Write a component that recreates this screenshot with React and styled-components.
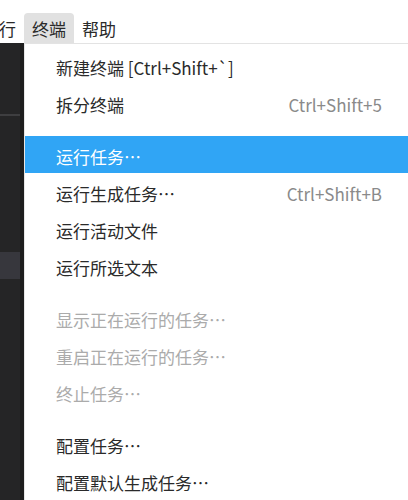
import styled, { createGlobalStyle } from 'styled-components';

const GlobalStyle = createGlobalStyle`
  html, body {
    margin: 0;
    padding: 0;
    background: #ffffff;
    overflow: hidden;
  }
  body {
    font-family: "Noto Sans CJK SC", "Noto Sans", sans-serif;
  }
`;

const Page = styled.div`
  width: 408px;
  height: 500px;
  display: flex;
  flex-direction: column;
  overflow: hidden;
`;

const MenuBar = styled.div`
  height: 43px;
  display: flex;
  align-items: flex-end;
  background: #ffffff;
  flex-shrink: 0;
`;

const BarItem = styled.div`
  height: 30px;
  padding: 0 8px;
  display: flex;
  align-items: center;
  font-size: 17px;
  color: #2a2a2a;
  border-radius: 4px 4px 0 0;
  background: ${(p) => (p.$open ? '#e1e1e1' : 'transparent')};
  margin-left: ${(p) => (p.$offset ? p.$offset : '0')};
  white-space: nowrap;
`;

const Body = styled.div`
  flex: 1;
  display: flex;
  min-height: 0;
`;

const Sidebar = styled.div`
  width: 20px;
  background: #252526;
  border-right: 4px solid #1e1e1e;
  display: flex;
  flex-direction: column;
  flex-shrink: 0;
`;

const SideRule = styled.div`
  height: 2px;
  background: #3e3e40;
  margin-top: 71px;
`;

const SideRow = styled.div`
  height: 27px;
  background: #37373d;
  margin-top: 136px;
`;

const Menu = styled.div`
  flex: 1;
  background: #ffffff;
  border-left: 1px solid #e6e6e6;
  border-top: 1px solid #e3e3e3;
  padding-top: 3px;
  display: flex;
  flex-direction: column;
`;

const Item = styled.div`
  height: 37px;
  flex-shrink: 0;
  display: flex;
  align-items: center;
  justify-content: space-between;
  padding: 0 26px 0 31px;
  font-size: 17px;
  background: ${(p) => (p.$active ? '#30a5f5' : 'transparent')};
  color: ${(p) => (p.$active ? '#ffffff' : p.$disabled ? '#ababab' : '#2a2a2a')};
  white-space: nowrap;
`;

const Label = styled.span`
  padding-top: 3px;
`;

const Shortcut = styled.span`
  color: #8a8a8a;
  padding-top: 3px;
`;

const Separator = styled.div`
  height: 15px;
  flex-shrink: 0;
`;

const groups = [
  [
    { label: '新建终端 [Ctrl+Shift+`]' },
    { label: '拆分终端', key: 'Ctrl+Shift+5' },
  ],
  [
    { label: '运行任务…', active: true },
    { label: '运行生成任务…', key: 'Ctrl+Shift+B' },
    { label: '运行活动文件' },
    { label: '运行所选文本' },
  ],
  [
    { label: '显示正在运行的任务…', disabled: true },
    { label: '重启正在运行的任务…', disabled: true },
    { label: '终止任务…', disabled: true },
  ],
  [
    { label: '配置任务…' },
    { label: '配置默认生成任务…' },
  ],
];

const App = () => {
  return (
    <Page lang="zh-CN">
      <GlobalStyle />
      <MenuBar>
        <BarItem $offset="-26px">运行</BarItem>
        <BarItem $open>终端</BarItem>
        <BarItem>帮助</BarItem>
      </MenuBar>
      <Body>
        <Sidebar>
          <SideRule />
          <SideRow />
        </Sidebar>
        <Menu>
          {groups.map((g, gi) => (
            <div key={gi}>
              {gi > 0 && <Separator />}
              {g.map((it) => (
                <Item key={it.label} $active={it.active} $disabled={it.disabled}>
                  <Label>{it.label}</Label>
                  {it.key && <Shortcut>{it.key}</Shortcut>}
                </Item>
              ))}
            </div>
          ))}
        </Menu>
      </Body>
    </Page>
  );
};

export default App;
